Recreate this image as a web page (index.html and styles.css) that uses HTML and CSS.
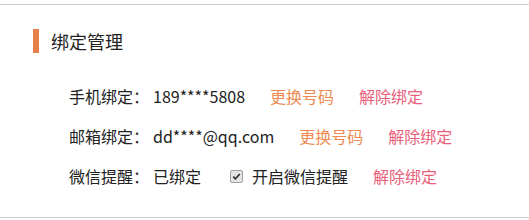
FILE: index.html
```html
<!DOCTYPE html>
<html lang="zh-CN">
<head>
<meta charset="utf-8">
<title>绑定管理</title>
<link rel="stylesheet" href="styles.css">
</head>
<body>
<section class="panel">
  <h2 class="title"><span class="bar"></span>绑定管理</h2>
  <div class="rows">
    <div class="row">
      <span class="label">手机绑定：</span>
      <span class="value">189****5808</span>
      <a class="link change" href="#">更换号码</a>
      <a class="link unbind" href="#">解除绑定</a>
    </div>
    <div class="row">
      <span class="label">邮箱绑定：</span>
      <span class="value">dd****@qq.com</span>
      <a class="link change" href="#">更换号码</a>
      <a class="link unbind" href="#">解除绑定</a>
    </div>
    <div class="row">
      <span class="label">微信提醒：</span>
      <span class="value">已绑定</span>
      <label class="check"><input type="checkbox" checked>开启微信提醒</label>
      <a class="link unbind" href="#">解除绑定</a>
    </div>
  </div>
</section>
</body>
</html>
```
FILE: styles.css
```css
html, body {
  margin: 0;
  padding: 0;
  background: #fff;
}
body {
  font-family: "Noto Sans CJK SC", "Noto Sans", sans-serif;
  color: #222;
  font-size: 16px;
}
.panel {
  margin-top: 4px;
  height: 212px;
  border-top: 1px solid #cccccc;
  border-bottom: 1px solid #cccccc;
  box-sizing: content-box;
}
.title {
  margin: 0;
  padding: 24px 0 0 33px;
  display: flex;
  align-items: center;
  gap: 12px;
  font-size: 18px;
  font-weight: normal;
  line-height: 24px;
  color: #222;
}
.bar {
  display: block;
  width: 6px;
  height: 24px;
  background: #e8804a;
}
.rows {
  padding: 23px 0 0 69px;
}
.row {
  display: flex;
  align-items: center;
  height: 40px;
  line-height: 40px;
  white-space: nowrap;
}
.label {
  width: 84px;
  flex: none;
}
.value {
  margin-right: 25px;
}
.link {
  text-decoration: none;
  margin-right: 25px;
}
.change {
  color: #ee8a50;
}
.unbind {
  color: #e9607a;
}
.check {
  display: flex;
  align-items: center;
  margin-right: 25px;
  margin-left: 4px;
}
.check input {
  appearance: none;
  -webkit-appearance: none;
  width: 13px;
  height: 13px;
  margin: 0 9px 0 0;
  border: 1px solid #a0a0a0;
  border-radius: 2px;
  box-sizing: border-box;
  background: #e4e4e4 url("data:image/svg+xml;utf8,<svg xmlns='http://www.w3.org/2000/svg' viewBox='0 0 11 11'><path d='M2.2 5.6 L4.4 7.8 L8.8 3' fill='none' stroke='%23333' stroke-width='1.8'/></svg>") center / 11px 11px no-repeat;
}
```
